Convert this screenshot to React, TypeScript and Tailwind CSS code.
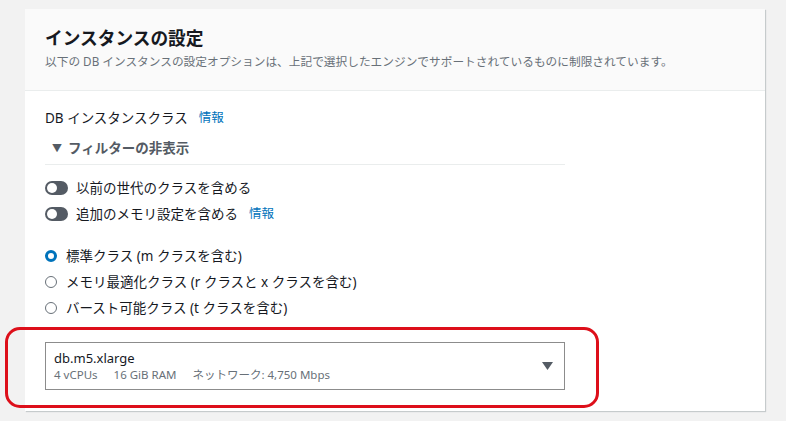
import React from "react";

const font = { fontFamily: '"Noto Sans", "Noto Sans CJK JP", sans-serif' };

function Toggle() {
  return (
    <span className="relative inline-block h-[14px] w-[23px] shrink-0 rounded-full bg-[#545b64]">
      <span className="absolute left-[2px] top-[2px] h-[10px] w-[10px] rounded-full bg-white" />
    </span>
  );
}

function Radio({ checked }: { checked?: boolean }) {
  return checked ? (
    <span className="inline-block h-[12px] w-[12px] shrink-0 rounded-full border-[3.5px] border-[#0073bb] bg-white" />
  ) : (
    <span className="inline-block h-[12px] w-[12px] shrink-0 rounded-full border border-[#687078] bg-white" />
  );
}

export default function App() {
  return (
    <div
      className="relative h-[421px] w-[786px] overflow-hidden bg-[#f2f2f2] pl-[25px] pt-[9px] text-[#16191f]"
      style={font}
    >
      <div className="h-[402px] w-[740px] bg-white shadow-[1px_1px_1px_rgba(0,28,36,0.18)]">
        <div className="h-[82px] border-b border-[#eaeded] bg-[#fafafa] px-[20px] pt-[17px]">
          <h2 className="text-[17.7px] font-bold leading-[24px]">インスタンスの設定</h2>
          <p className="mt-[3px] text-[11.7px] leading-[16px] text-[#687078]">
            以下の DB インスタンスの設定オプションは、上記で選択したエンジンでサポートされているものに制限されています。
          </p>
        </div>
        <div className="px-[20px] pt-[18px]">
          <div className="flex items-center gap-[11px] text-[13.5px] leading-[18px]">
            <span>DB インスタンスクラス</span>
            <span className="text-[12.5px] text-[#0073bb]">情報</span>
          </div>
          <div className="mt-[12px] w-[520px] border-b border-[#eaeded] pb-[7px]">
            <div className="flex items-center gap-[6px] pl-[7px] text-[13.5px] font-bold leading-[18px] text-[#545b64]">
              <span className="text-[10px]">▼</span>
              <span>フィルターの非表示</span>
            </div>
          </div>
          <div className="mt-[14px] flex flex-col gap-[8px] text-[13.5px] leading-[18px]">
            <div className="flex items-center gap-[8px]">
              <Toggle />
              <span>以前の世代のクラスを含める</span>
            </div>
            <div className="flex items-center gap-[8px]">
              <Toggle />
              <span>追加のメモリ設定を含める</span>
              <span className="ml-[3px] text-[12.5px] text-[#0073bb]">情報</span>
            </div>
          </div>
          <div className="mt-[24px] flex flex-col gap-[8px] text-[13.5px] leading-[18px]">
            <div className="flex items-center gap-[9px]">
              <Radio checked />
              <span>標準クラス (m クラスを含む)</span>
            </div>
            <div className="flex items-center gap-[9px]">
              <Radio />
              <span>メモリ最適化クラス (r クラスと x クラスを含む)</span>
            </div>
            <div className="flex items-center gap-[9px]">
              <Radio />
              <span>バースト可能クラス (t クラスを含む)</span>
            </div>
          </div>
          <div className="mt-[25px] flex h-[48px] w-[520px] items-center justify-between border border-[#8c8c8c] px-[8px]">
            <div>
              <div className="text-[13px] leading-[18px]">db.m5.xlarge</div>
              <div className="flex gap-[16px] text-[11.5px] leading-[16px] text-[#687078]">
                <span>4 vCPUs</span>
                <span>16 GiB RAM</span>
                <span>ネットワーク: 4,750 Mbps</span>
              </div>
            </div>
            <svg width="11" height="8" viewBox="0 0 11 8" className="mr-[3px]">
              <path d="M0 0h11L5.5 8z" fill="#545b64" />
            </svg>
          </div>
        </div>
      </div>
      <div className="pointer-events-none absolute left-[5px] top-[327px] h-[81px] w-[594px] rounded-[15px] border-[3px] border-[#dd0f1a]" />
    </div>
  );
}
